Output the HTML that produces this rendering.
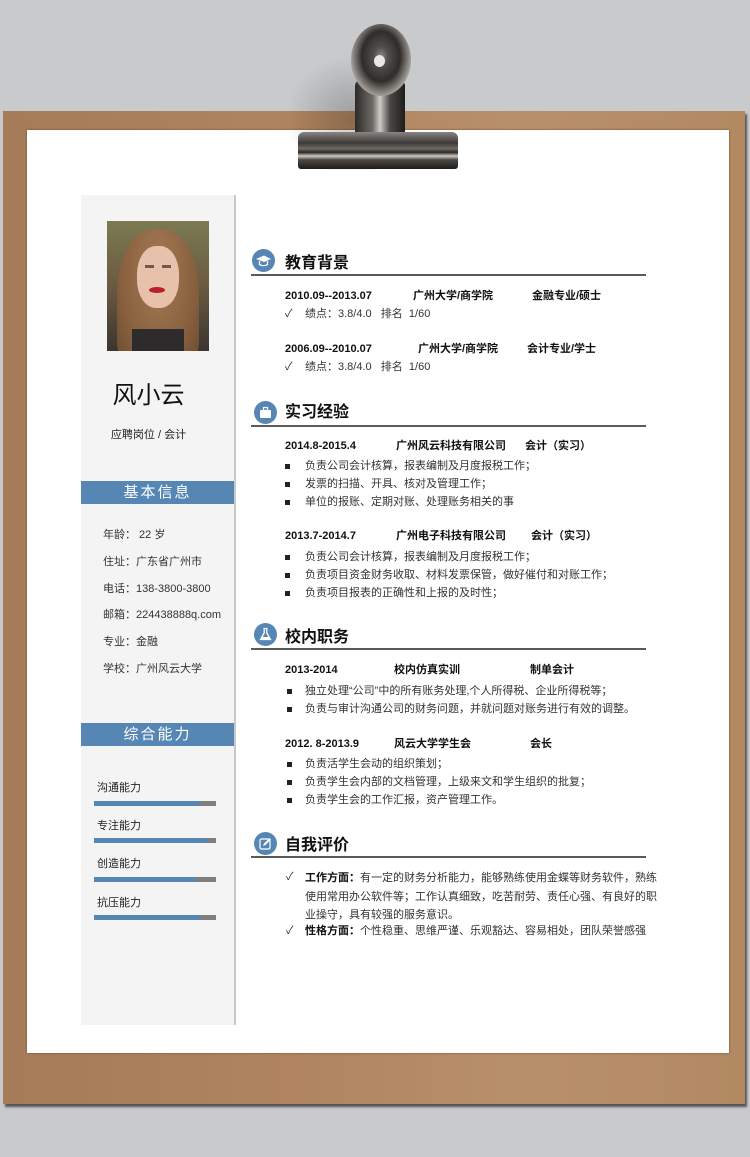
<!DOCTYPE html>
<html><head><meta charset="utf-8"><style>
*{margin:0;padding:0;box-sizing:border-box}
body{width:750px;height:1157px;position:relative;overflow:hidden;background:#c9cacb;font-family:"Liberation Sans","Noto Sans CJK SC",sans-serif;color:#222}
.a{position:absolute;white-space:nowrap}
.t{position:absolute;white-space:nowrap;font-size:11px;line-height:16px;color:#333}
.b{font-weight:bold;color:#111}
.h{position:absolute;font-size:16px;font-weight:bold;line-height:20px;color:#111}
.ln{position:absolute;left:251px;width:395px;height:2px;background:#5a5a5a}
.ic{position:absolute;width:23px;height:23px;border-radius:50%;background:#5686b4}
.bar{position:absolute;left:81px;width:153px;height:23px;background:#5686b4;color:#fff;font-size:15px;line-height:23px;text-align:center;letter-spacing:2px}
.sk{position:absolute;left:94px;width:122px;height:5px;background:#7f7f7f}
.sk i{display:block;height:5px;background:#5686b4}
.sq{position:absolute;width:5px;height:5px;background:#222}
</style></head><body>
<div class="a" style="left:3px;top:111px;width:742px;height:993px;background:linear-gradient(90deg,#a57c57,#b08560 40%,#b8906a 70%,#b28962);box-shadow:2px 3px 2px #555"></div>
<div class="a" style="left:27px;top:130px;width:702px;height:923px;background:#fff;box-shadow:0 0 2px #6b4a2c"></div>
<!-- clip -->
<div class="a" style="left:285px;top:55px;width:90px;height:115px;background:radial-gradient(ellipse at 75% 55%,rgba(0,0,0,.22),rgba(0,0,0,0) 70%)"></div>
<div class="a" style="left:355px;top:80px;width:50px;height:60px;border-radius:6px;background:linear-gradient(90deg,#2c2a28,#6e6a66 35%,#cfcbc6 50%,#4a4744 70%,#1f1d1c)"></div>
<div class="a" style="left:351px;top:24px;width:60px;height:72px;border-radius:50%;background:radial-gradient(ellipse at 50% 45%,#8a8785 0,#4f4c4a 18%,#2f2d2b 45%,#a9a5a0 72%,#e0dcd7 80%,#2a2826 92%)"></div>
<div class="a" style="left:374px;top:55px;width:11px;height:12px;border-radius:50%;background:#e8e8e8"></div>
<div class="a" style="left:298px;top:132px;width:160px;height:37px;border-radius:6px 6px 3px 3px;background:linear-gradient(180deg,#8a8582,#3c3936 30%,#6f6b67 45%,#2a2826 55%,#cfcac5 65%,#4b4845 75%,#1e1c1b)"></div>
<!-- sidebar -->
<div class="a" style="left:81px;top:195px;width:155px;height:830px;background:#f4f4f4;border-right:2px solid #c8c8c8"></div>
<div class="a" style="left:107px;top:221px;width:102px;height:130px;overflow:hidden;background:linear-gradient(180deg,#7b7a52,#6b5a40 50%,#3a3532)">
 <div class="a" style="left:10px;top:8px;width:82px;height:140px;border-radius:45% 45% 20% 20%;background:radial-gradient(ellipse at 50% 30%,#a57a55,#8a6240 60%,#6a4a30)"></div>
 <div class="a" style="left:30px;top:25px;width:42px;height:62px;border-radius:45%;background:#e7c1aa"></div>
 <div class="a" style="left:42px;top:66px;width:16px;height:6px;border-radius:50%;background:#b8202a"></div>
 <div class="a" style="left:38px;top:44px;width:9px;height:3px;background:#6d5a50"></div>
 <div class="a" style="left:55px;top:44px;width:9px;height:3px;background:#6d5a50"></div>
 <div class="a" style="left:25px;top:108px;width:52px;height:30px;background:#2e2b2c"></div>
</div>
<div class="a" style="left:81px;top:380px;width:135px;text-align:center;font-size:24px;line-height:32px;color:#111">风小云</div>
<div class="t" style="left:81px;top:427px;width:135px;text-align:center;color:#222">应聘岗位 / 会计</div>
<div class="bar" style="top:481px">基本信息</div>
<div class="t" style="left:103px;top:527px">年龄：  22 岁</div>
<div class="t" style="left:103px;top:554px">住址：广东省广州市</div>
<div class="t" style="left:103px;top:581px">电话：138-3800-3800</div>
<div class="t" style="left:103px;top:607px">邮箱：224438888q.com</div>
<div class="t" style="left:103px;top:634px">专业：金融</div>
<div class="t" style="left:103px;top:661px">学校：广州风云大学</div>
<div class="bar" style="top:723px">综合能力</div>
<div class="t" style="left:97px;top:780px;color:#222">沟通能力</div><div class="sk" style="top:801px"><i style="width:106px"></i></div>
<div class="t" style="left:97px;top:818px;color:#222">专注能力</div><div class="sk" style="top:838px"><i style="width:113px"></i></div>
<div class="t" style="left:97px;top:856px;color:#222">创造能力</div><div class="sk" style="top:877px"><i style="width:101px"></i></div>
<div class="t" style="left:97px;top:895px;color:#222">抗压能力</div><div class="sk" style="top:915px"><i style="width:106px"></i></div>

<div class="ic" style="left:252px;top:249px"><svg width="23" height="23" viewBox="0 0 23 23"><path d="M4 10l8-3.5 7 3.5-7 3z" fill="#fff"/><path d="M7.5 12v3.5c2 1.5 6 1.5 8 0V12" fill="none" stroke="#fff" stroke-width="1.3"/></svg></div>
<div class="h" style="left:285px;top:254px">教育背景</div>
<div class="ln" style="top:274px"></div>
<div class="t b" style="left:285px;top:288px">2010.09--2013.07</div>
<div class="t b" style="left:413px;top:288px">广州大学/商学院</div>
<div class="t b" style="left:532px;top:288px">金融专业/硕士</div>
<div class="t" style="left:285px;top:306px">✓</div><div class="t" style="left:305px;top:306px">绩点：3.8/4.0&nbsp;&nbsp; 排名&nbsp; 1/60</div>
<div class="t b" style="left:285px;top:341px">2006.09--2010.07</div>
<div class="t b" style="left:418px;top:341px">广州大学/商学院</div>
<div class="t b" style="left:527px;top:341px">会计专业/学士</div>
<div class="t" style="left:285px;top:359px">✓</div><div class="t" style="left:305px;top:359px">绩点：3.8/4.0&nbsp;&nbsp; 排名&nbsp; 1/60</div>

<div class="ic" style="left:254px;top:401px"><svg width="23" height="23" viewBox="0 0 23 23"><rect x="6" y="9" width="11" height="8" rx="1" fill="#fff"/><rect x="9.5" y="6.5" width="4" height="3" fill="none" stroke="#fff" stroke-width="1.2"/></svg></div>
<div class="h" style="left:285px;top:403px">实习经验</div>
<div class="ln" style="top:425px"></div>
<div class="t b" style="left:285px;top:438px">2014.8-2015.4</div>
<div class="t b" style="left:396px;top:438px">广州风云科技有限公司</div>
<div class="t b" style="left:525px;top:438px">会计（实习）</div>
<div class="sq" style="left:285px;top:464px"></div><div class="t" style="left:305px;top:458px">负责公司会计核算，报表编制及月度报税工作；</div>
<div class="sq" style="left:285px;top:482px"></div><div class="t" style="left:305px;top:476px">发票的扫描、开具、核对及管理工作；</div>
<div class="sq" style="left:285px;top:500px"></div><div class="t" style="left:305px;top:494px">单位的报账、定期对账、处理账务相关的事</div>
<div class="t b" style="left:285px;top:528px">2013.7-2014.7</div>
<div class="t b" style="left:396px;top:528px">广州电子科技有限公司</div>
<div class="t b" style="left:531px;top:528px">会计（实习）</div>
<div class="sq" style="left:285px;top:555px"></div><div class="t" style="left:305px;top:549px">负责公司会计核算，报表编制及月度报税工作；</div>
<div class="sq" style="left:285px;top:573px"></div><div class="t" style="left:305px;top:567px">负责项目资金财务收取、材料发票保管，做好催付和对账工作；</div>
<div class="sq" style="left:285px;top:591px"></div><div class="t" style="left:305px;top:585px">负责项目报表的正确性和上报的及时性；</div>

<div class="ic" style="left:254px;top:623px"><svg width="23" height="23" viewBox="0 0 23 23"><path d="M9.5 5.5h4M10.2 5.5v4.5L6.5 16.5h10L12.8 10V5.5" fill="none" stroke="#fff" stroke-width="1.3"/><path d="M8 14h7l1 2.2H7z" fill="#fff"/></svg></div>
<div class="h" style="left:285px;top:628px">校内职务</div>
<div class="ln" style="top:648px"></div>
<div class="t b" style="left:285px;top:662px">2013-2014</div>
<div class="t b" style="left:394px;top:662px">校内仿真实训</div>
<div class="t b" style="left:530px;top:662px">制单会计</div>
<div class="sq" style="left:287px;top:689px"></div><div class="t" style="left:305px;top:683px">独立处理“公司”中的所有账务处理,个人所得税、企业所得税等；</div>
<div class="sq" style="left:287px;top:707px"></div><div class="t" style="left:305px;top:701px">负责与审计沟通公司的财务问题，并就问题对账务进行有效的调整。</div>
<div class="t b" style="left:285px;top:736px">2012. 8-2013.9</div>
<div class="t b" style="left:394px;top:736px">风云大学学生会</div>
<div class="t b" style="left:530px;top:736px">会长</div>
<div class="sq" style="left:287px;top:762px"></div><div class="t" style="left:305px;top:756px">负责活学生会动的组织策划；</div>
<div class="sq" style="left:287px;top:780px"></div><div class="t" style="left:305px;top:774px">负责学生会内部的文档管理，上级来文和学生组织的批复；</div>
<div class="sq" style="left:287px;top:798px"></div><div class="t" style="left:305px;top:792px">负责学生会的工作汇报，资产管理工作。</div>

<div class="ic" style="left:254px;top:832px"><svg width="23" height="23" viewBox="0 0 23 23"><rect x="6" y="7" width="10" height="10" rx="1.5" fill="none" stroke="#fff" stroke-width="1.2"/><path d="M9 14l1-2.5 5.5-5.5 1.5 1.5-5.5 5.5z" fill="#fff"/></svg></div>
<div class="h" style="left:285px;top:836px">自我评价</div>
<div class="ln" style="top:856px"></div>
<div class="t" style="left:286px;top:869px">✓</div>
<div class="a" style="left:305px;top:869px;width:352px;white-space:normal;font-size:11px;line-height:18.5px;color:#333"><b style="color:#111">工作方面：</b>有一定的财务分析能力，能够熟练使用金蝶等财务软件，熟练使用常用办公软件等；工作认真细致，吃苦耐劳、责任心强、有良好的职业操守，具有较强的服务意识。</div>
<div class="t" style="left:286px;top:923px">✓</div>
<div class="t" style="left:305px;top:923px"><b style="color:#111">性格方面：</b>个性稳重、思维严谨、乐观豁达、容易相处，团队荣誉感强</div>
</body></html>
